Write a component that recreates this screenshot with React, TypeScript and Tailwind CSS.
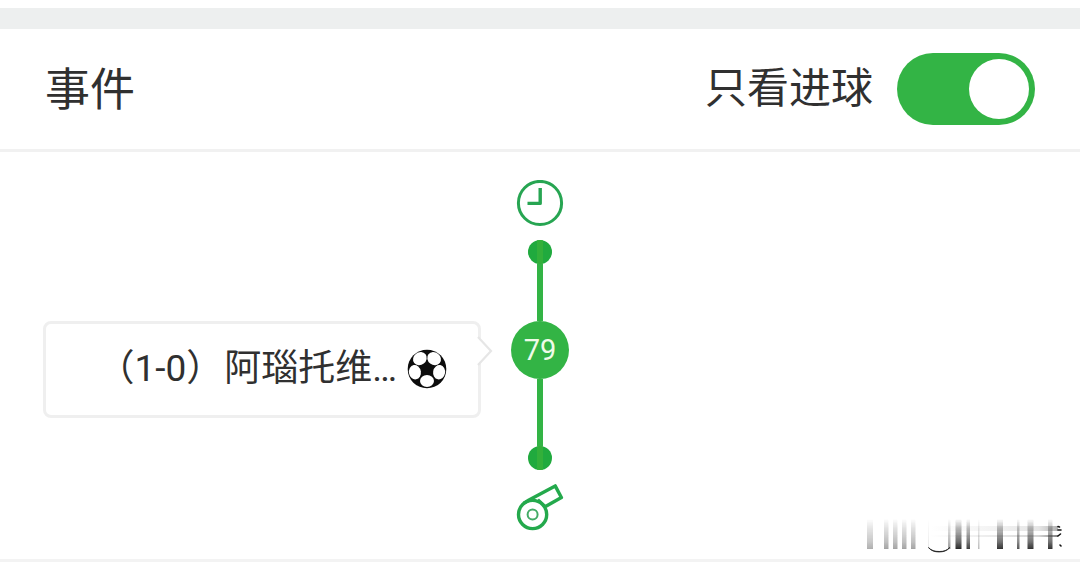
import { useState } from 'react'

const smearBars = [
  { x: 867, w: 6, o: 0.35 },
  { x: 884, w: 4.5, o: 0.4 },
  { x: 893, w: 4.5, o: 0.4 },
  { x: 902, w: 4.5, o: 0.4 },
  { x: 911, w: 4.5, o: 0.4 },
  { x: 928, w: 1, o: 0.1 },
  { x: 948, w: 2.5, o: 0.45 },
  { x: 955.5, w: 6, o: 0.95 },
  { x: 966.5, w: 3.5, o: 0.85 },
  { x: 978, w: 1.5, o: 0.3 },
  { x: 997, w: 6, o: 0.9 },
  { x: 1017, w: 2.5, o: 0.75 },
  { x: 1027.5, w: 6, o: 0.9 },
  { x: 1048, w: 4.5, o: 0.9 },
]

function ClockIcon() {
  return (
    <svg width="48" height="48" viewBox="0 0 48 48" fill="none" stroke="#27a552">
      <circle cx="24" cy="23" r="21.6" strokeWidth="3" />
      <path d="M24.2 8v15.4H11.5" strokeWidth="3.4" strokeLinejoin="round" />
    </svg>
  )
}

function WhistleIcon() {
  return (
    <svg width="48" height="48" viewBox="0 0 48 48" fill="none" stroke="#24a94c" strokeWidth="3.4" strokeLinejoin="round">
      <path d="M7.5 19.5 13 16 39.2 1.9l6.2 11.6-15.9 9" />
      <circle cx="16.6" cy="30.5" r="14.1" />
      <circle cx="16.6" cy="30.5" r="5" strokeWidth="2" stroke="#43ab66" />
      <path d="M22 15.5l7.5 7" strokeWidth="2.6" />
    </svg>
  )
}

function BallIcon() {
  return (
    <svg width="40" height="40" viewBox="0 0 40 40" className="shrink-0">
      <circle cx="20" cy="20" r="19.3" fill="#0c0c0c" />
      <g fill="#fff">
        <ellipse cx="12.9" cy="9.6" rx="7.2" ry="6.3" transform="rotate(-38 12.9 9.6)" />
        <ellipse cx="27.1" cy="9.6" rx="7.2" ry="6.3" transform="rotate(38 27.1 9.6)" />
        <ellipse cx="7.9" cy="23.2" rx="6" ry="7.2" transform="rotate(-10 7.9 23.2)" />
        <ellipse cx="32.1" cy="23.2" rx="6" ry="7.2" transform="rotate(10 32.1 23.2)" />
        <ellipse cx="20" cy="32" rx="7" ry="5.9" />
      </g>
    </svg>
  )
}

function Dot({ top }: { top?: boolean }) {
  return (
    <div className={`flex h-6 w-6 justify-center overflow-hidden rounded-full bg-[#20aa3e] ${top ? 'items-end' : 'items-start'}`}>
      <div className="h-6 w-1.5 bg-[#33b03a]" />
    </div>
  )
}

function Smear() {
  return (
    <svg className="absolute left-[860px] top-[512px]" width="210" height="46" viewBox="860 512 210 46">
      <defs>
        <linearGradient id="fade" x1="0" y1="0" x2="0" y2="1">
          <stop offset="0" stopColor="#333" stopOpacity="0" />
          <stop offset="0.3" stopColor="#333" stopOpacity="0.35" />
          <stop offset="0.75" stopColor="#222" stopOpacity="0.7" />
          <stop offset="1" stopColor="#111" stopOpacity="0.95" />
        </linearGradient>
        <linearGradient id="streak" x1="0" y1="0" x2="1" y2="0">
          <stop offset="0" stopColor="#444" stopOpacity="0" />
          <stop offset="0.5" stopColor="#444" stopOpacity="0.12" />
          <stop offset="0.85" stopColor="#444" stopOpacity="0.25" />
          <stop offset="1" stopColor="#222" stopOpacity="0.65" />
        </linearGradient>
        <filter id="soft" x="-50%" y="-10%" width="200%" height="120%">
          <feGaussianBlur stdDeviation="0.7 0.2" />
        </filter>
      </defs>
      {smearBars.map((b) => (
        <rect key={b.x} x={b.x} y="519" width={b.w} height="30" fill="url(#fade)" opacity={b.o} filter="url(#soft)" />
      ))}
      <rect x="930" y="526" width="128" height="5" fill="url(#streak)" opacity="0.55" />
      <rect x="930" y="535" width="128" height="2" fill="url(#streak)" opacity="0.9" />
      <path d="M928.5 547.5c4 6 17 6 21.3 0-3 3-6 4-10.5 4s-8-1-10.800-4z" fill="#111" stroke="#111" strokeWidth="0.7" />
      <path
        d="M1058 526.5l1.5.5M1058 530h3M1058 536l2.5-2M1060 545l1 1"
        stroke="#111"
        strokeWidth="1.6"
        strokeLinecap="round"
      />
    </svg>
  )
}

export default function App() {
  const [goalsOnly, setGoalsOnly] = useState(true)

  return (
    <div className="relative h-[568px] w-[1080px] overflow-hidden bg-white pt-2 font-['Roboto','Noto_Sans_CJK_SC',sans-serif] text-[#303030]">
      <div className="h-[21px] bg-[#edefef]" />

      <header className="flex h-[123px] items-center justify-between border-b-[3px] border-[#f1f1f1] pl-[45px] pr-[45px]">
        <h1 className="pt-0.5 text-[45px] leading-none">事件</h1>
        <div className="flex items-center gap-6">
          <span className="text-[42px] leading-none">只看进球</span>
          <button
            role="switch"
            aria-checked={goalsOnly}
            aria-label="只看进球"
            onClick={() => setGoalsOnly((v) => !v)}
            className={`flex h-[72px] w-[138px] items-center rounded-full p-1.5 ${
              goalsOnly ? 'justify-end bg-[#33b445]' : 'justify-start bg-[#d5d5d5]'
            }`}
          >
            <span className="h-[60px] w-[60px] rounded-full bg-white" />
          </button>
        </div>
      </header>

      <main className="grid h-[410px] grid-cols-[481px_118px_1fr] border-b-[3px] border-[#f3f3f3] pt-7">
        {/* Home team event */}
        <div className="pl-[43px] pt-[141px]">
          <div className="relative flex h-[97px] items-center justify-end gap-2.5 rounded-lg border-[3px] border-[#efefef] pb-0.5 pr-[31px]">
            <span className="whitespace-nowrap text-[37px] leading-none">
              <span className="mr-px">（1-0）</span>阿瑙托维…
            </span>
            <BallIcon />
            <svg className="absolute -right-[15px] top-3" width="16" height="30" viewBox="0 0 16 30">
              <path d="M0 1h2v28H0z" fill="#fff" />
              <path d="M1 1l13 14L1 29" fill="#fff" stroke="#e6e6e6" strokeWidth="2.2" />
            </svg>
          </div>
        </div>

        {/* Timeline */}
        <div className="flex flex-col items-center">
          <ClockIcon />
          <div className="h-3" />
          <Dot top />
          <div className="h-[57px] w-1.5 bg-[#33b445]" />
          <div className="flex h-[58px] w-[58px] items-center justify-center rounded-full bg-[#33b445] text-[29px] leading-none text-[#effbe8]">
            79
          </div>
          <div className="h-[67px] w-1.5 bg-[#33b445]" />
          <Dot />
          <div className="h-3.5" />
          <WhistleIcon />
        </div>
      </main>

      <Smear />
    </div>
  )
}
